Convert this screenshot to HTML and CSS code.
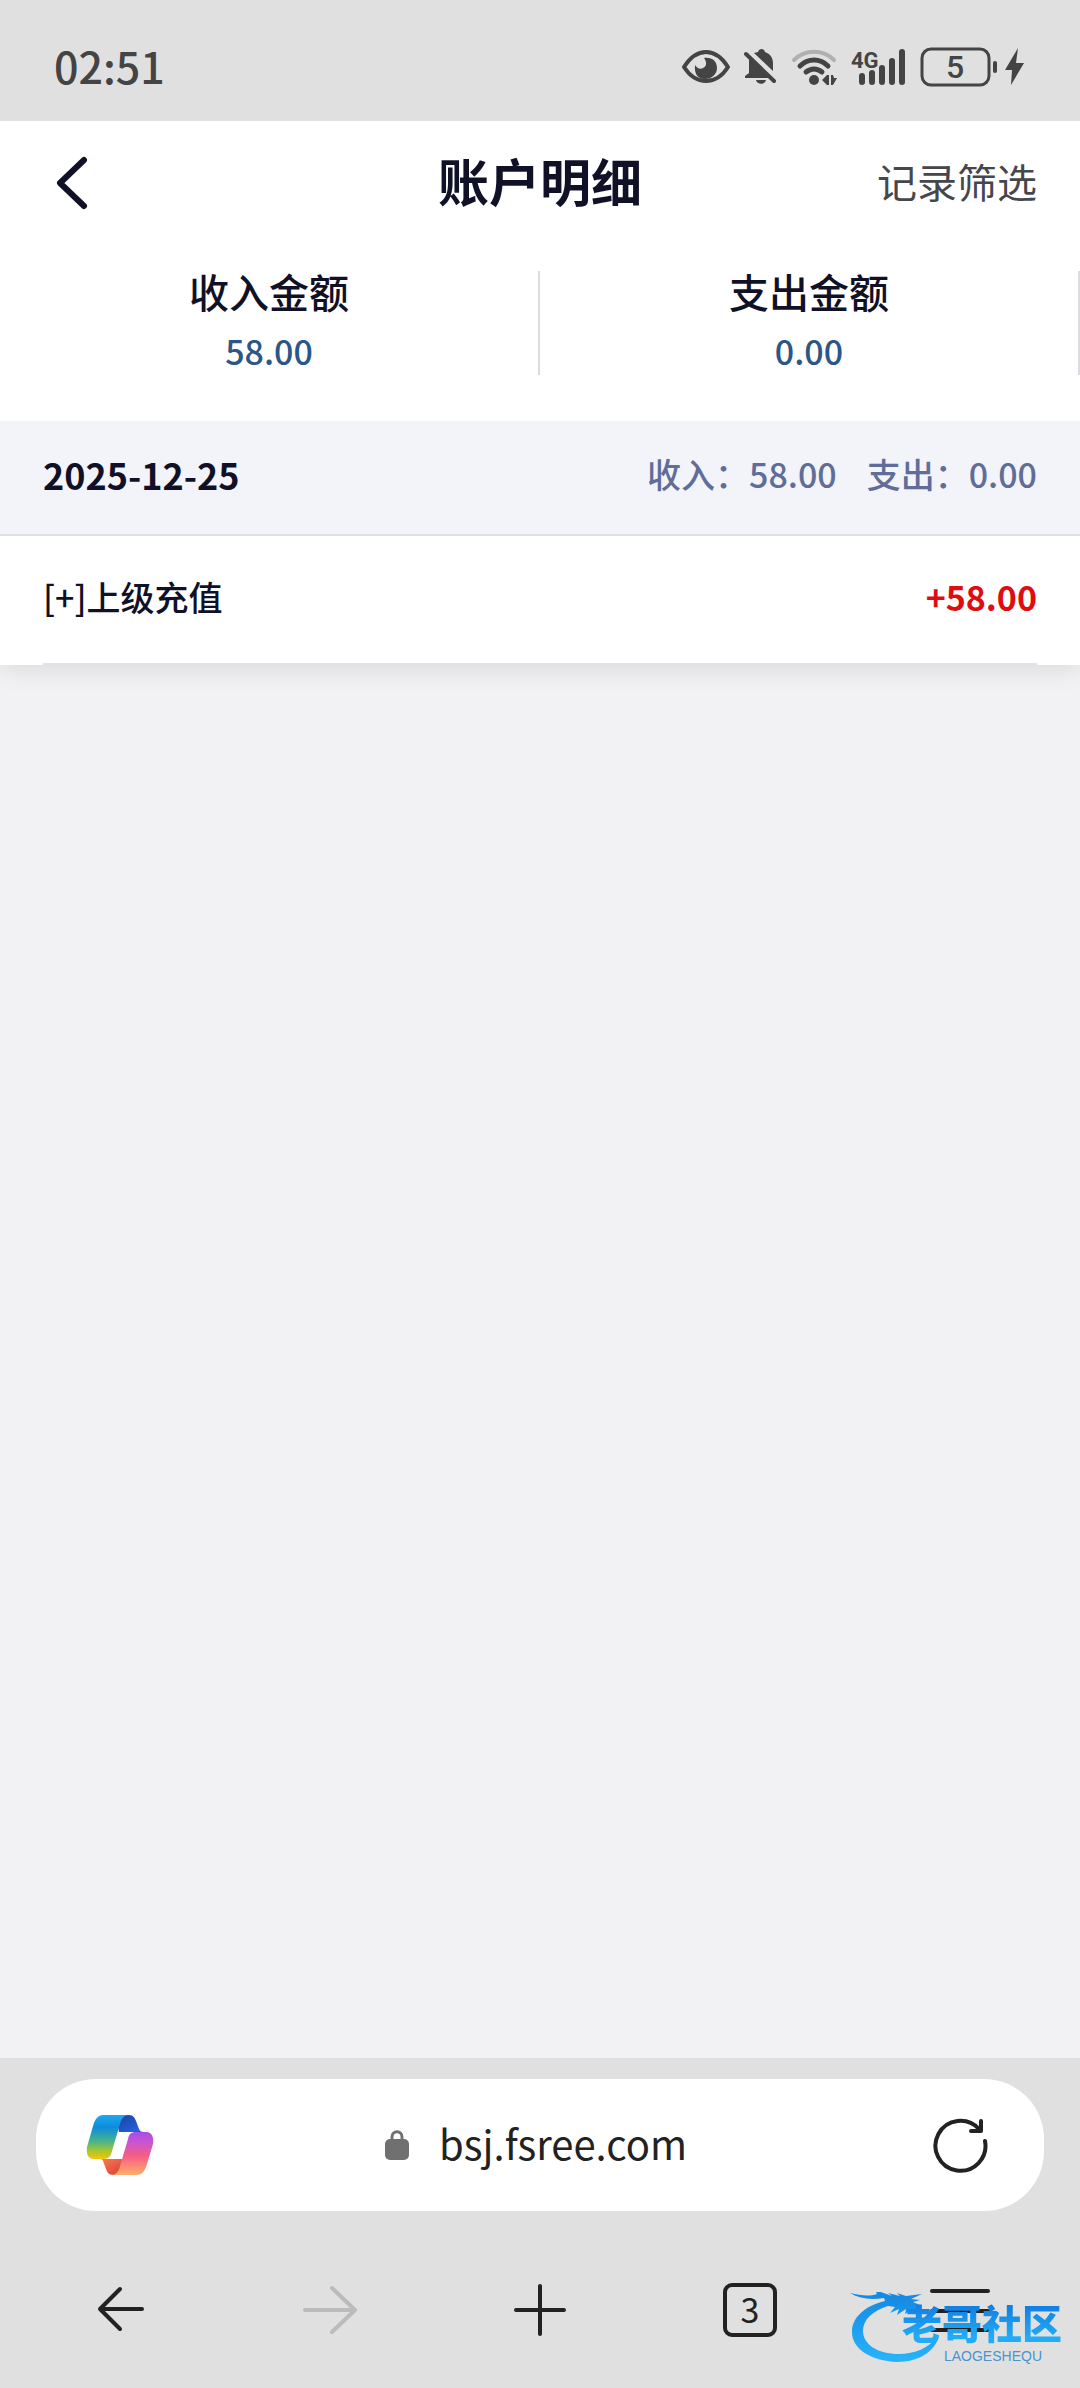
FILE: index.html
```html
<!DOCTYPE html>
<html lang="zh-CN">
<head>
    <meta charset="UTF-8">
    <meta name="viewport" content="width=device-width, initial-scale=1.0">
    <title>账户明细</title>
    <link rel="stylesheet" href="styles.css">
</head>
<body>

    <div class="status-bar">
        <span class="clock">02:51</span>
        <div class="status-icons">
            <!-- eye comfort -->
            <svg width="48" height="40" viewBox="0 0 48 40">
                <path d="M2 20C9 9 17 5 24 5s15 4 22 15c-7 11-15 14-22 14S9 31 2 20z" fill="none" stroke="#444" stroke-width="4" stroke-linejoin="round"/>
                <path d="M22 11c8-1 13 3 13 10 0 6-5 11-12 11S12 27 13 18c2 3 5 5 8 3 4-2 4-6 1-10z" fill="#444"/>
            </svg>
            <!-- muted bell -->
            <svg width="33" height="40" viewBox="0 0 33 40">
                <path d="M5 12v14l-4 3v2h25L6 11zM10 6l4-1c1-4 6-4 7 0 6 2 8 7 8 11v8L10 6zM12 33h10c-1 5-9 5-10 0z" fill="#444"/>
                <path d="M2 7l28 27" stroke="#444" stroke-width="4" stroke-linecap="round"/>
            </svg>
            <!-- wifi -->
            <svg width="46" height="40" viewBox="0 0 46 40">
                <g fill="none" stroke="#444" stroke-width="5" stroke-linecap="round">
                    <path d="M3 13c11-11 29-11 40 0" stroke="#b0b0b0" stroke-width="4"/>
                    <path d="M9 19c8-8 20-8 28 0"/>
                    <path d="M15 25c5-4 11-4 16 0"/>
                </g>
                <circle cx="23" cy="33" r="5" fill="#444"/>
                <path d="M31 33l5-5h2v10h-2zM40 28h2l1 3h3l-4 7h-2z" fill="#444"/>
            </svg>
            <!-- mobile signal -->
            <svg width="55" height="40" viewBox="0 0 55 40">
                <text x="0" y="21" class="signal-text">4G</text>
                <path d="M11 29v6M21 26v9M31 21v14M41 14v21M51 5v30" stroke="#444" stroke-width="6" stroke-linecap="round"/>
            </svg>
            <!-- battery, charging -->
            <svg width="105" height="40" viewBox="0 0 105 40">
                <rect x="2" y="2" width="67" height="36" rx="9" fill="none" stroke="#444" stroke-width="3"/>
                <path d="M75 16v8" stroke="#444" stroke-width="4" stroke-linecap="round"/>
                <text x="35" y="31" class="battery-text">5</text>
                <path d="M98 1L85 23h7l-1 15 13-22h-8z" fill="#444"/>
            </svg>
        </div>
    </div>

    <header class="page-header">
        <button class="back-btn" aria-label="返回">
            <svg width="32" height="54" viewBox="0 0 32 54">
                <path d="M28 4L4 27l24 23" fill="none" stroke="#101126" stroke-width="6" stroke-linecap="round" stroke-linejoin="round"/>
            </svg>
        </button>
        <h1>账户明细</h1>
        <button class="filter-btn">记录筛选</button>
    </header>

    <section class="summary">
        <div class="summary-item">
            <span class="summary-label">收入金额</span>
            <span class="summary-value">58.00</span>
        </div>
        <div class="summary-item">
            <span class="summary-label">支出金额</span>
            <span class="summary-value">0.00</span>
        </div>
    </section>

    <main class="content">
        <section class="day">
            <div class="day-header">
                <h2>2025-12-25</h2>
                <div class="day-total">
                    <span>收入：58.00</span>
                    <span>支出：0.00</span>
                </div>
            </div>
            <div class="record">
                <span>[+]上级充值</span>
                <span class="amount">+58.00</span>
            </div>
        </section>
    </main>

    <footer class="browser">
        <div class="address-bar">
            <button class="icon-btn" aria-label="Copilot">
                <svg width="68" height="62" viewBox="0 0 68 62">
                    <defs>
                        <linearGradient id="cool" x1="0" y1="0" x2="0" y2="1">
                            <stop offset="0" stop-color="#20a8ef"/>
                            <stop offset=".28" stop-color="#0d8bdc"/>
                            <stop offset=".6" stop-color="#49b489"/>
                            <stop offset=".82" stop-color="#a9c62c"/>
                            <stop offset="1" stop-color="#f5c50a"/>
                        </linearGradient>
                        <linearGradient id="warm" x1="0" y1="0" x2="0" y2="1">
                            <stop offset="0" stop-color="#a94be8"/>
                            <stop offset=".25" stop-color="#c956cf"/>
                            <stop offset=".55" stop-color="#f75b86"/>
                            <stop offset="1" stop-color="#ffaf69"/>
                        </linearGradient>
                        <linearGradient id="blue" x1="0" y1="0" x2="1" y2="1">
                            <stop offset="0" stop-color="#1c3f9f"/>
                            <stop offset="1" stop-color="#2568e8"/>
                        </linearGradient>
                        <linearGradient id="red" x1="0" y1="0" x2="1" y2="1">
                            <stop offset="0" stop-color="#ff8054"/>
                            <stop offset="1" stop-color="#d43b35"/>
                        </linearGradient>
                    </defs>
                    <path d="M30 1h13c4 0 6 3 7 6l3 8c1 2 2 3 5 3H33z" fill="url(#blue)"/>
                    <path d="M38 61H27c-4 0-6-3-7-6l-3-8c-1-2-2-2-5-2h26z" fill="url(#red)"/>
                    <path d="M17 1h26c-5 0-8 4-9 9l-8 27c-1 5-3 8-8 8H8c-6 0-8-5-7-12L7 12C9 5 12 1 17 1z" fill="url(#cool)"/>
                    <path d="M51 61H25c5 0 8-4 9-9l8-27c1-5 3-7 8-7h10c6 0 8 5 7 12l-6 20c-2 7-5 11-10 11z" fill="url(#warm)"/>
                </svg>
            </button>
            <button class="url">
                <svg width="24" height="32" viewBox="0 0 24 32">
                    <path d="M7 13V8c0-7 10-7 10 0v5" fill="none" stroke="#707070" stroke-width="3"/>
                    <rect y="10" width="24" height="21" rx="5" fill="#707070"/>
                </svg>
                <span>bsj.fsree.com</span>
            </button>
            <button class="icon-btn" aria-label="刷新">
                <svg width="58" height="58" viewBox="0 0 58 58">
                    <g fill="none" stroke="#222" stroke-width="4" stroke-linecap="round" stroke-linejoin="round">
                        <path d="M54 25A25 25 0 1 1 48 13"/>
                        <path d="M50 5v10H40"/>
                    </g>
                </svg>
            </button>
        </div>
        <nav class="toolbar">
            <button aria-label="后退">
                <svg width="60" height="60" viewBox="0 0 60 60">
                    <path d="M52 29H10M30 9L10 29l20 20" class="stroke"/>
                </svg>
            </button>
            <button aria-label="前进" disabled>
                <svg width="60" height="60" viewBox="0 0 60 60">
                    <path d="M5 30h50M32 8l23 22-23 22" class="stroke muted"/>
                </svg>
            </button>
            <button aria-label="新建标签页">
                <svg width="60" height="60" viewBox="0 0 60 60">
                    <path d="M6 30h48M30 6v48" class="stroke"/>
                </svg>
            </button>
            <button aria-label="标签页"><span class="tab-count">3</span></button>
            <button aria-label="菜单">
                <svg width="60" height="60" viewBox="0 0 60 60">
                    <path d="M2 11h56M2 31h56M2 50h56" class="stroke"/>
                </svg>
            </button>
        </nav>

        <div class="watermark">
            <svg class="dragon" width="94" height="72" viewBox="0 0 94 72">
                <defs>
                    <linearGradient id="water" x1="0" y1="0" x2="0" y2="1">
                        <stop offset="0" stop-color="#1486e0"/>
                        <stop offset="1" stop-color="#27b4fa"/>
                    </linearGradient>
                </defs>
                <path d="M35 9C14 14 2 26 2 40c0 17 19 29 45 30 22 0 39-11 42-27-10 13-24 19-40 19-22 0-36-10-36-23 0-11 9-20 25-25l7 1-5 6 9-4-2 6 9-6-1 5 8-5 8 3-3-4 4-2-9-4 7-2-9-1 11-5-16 2-9-3 3 3-12-3 4 3-17-6 2 4c-9 3-17 1-27-1 10 6 21 7 34 5z" fill="url(#water)"/>
            </svg>
            <div class="watermark-text">
                <span class="watermark-name">老哥社区</span>
                <span class="watermark-latin">LAOGESHEQU</span>
            </div>
        </div>
    </footer>

</body>
</html>
```
FILE: styles.css
```css
* {
    box-sizing: border-box;
}

body {
    margin: 0;
    min-height: 100vh;
    display: flex;
    flex-direction: column;
    background-color: #f2f2f5;
    color: #101126;
    font-family: "Noto Sans CJK SC", sans-serif;
    font-size: 34px;
    line-height: 48px;
}

button {
    padding: 0;
    border: none;
    background: none;
    color: inherit;
    font: inherit;
    cursor: pointer;
}

svg {
    display: block;
}

/* Phone status bar */
.status-bar {
    display: flex;
    justify-content: space-between;
    align-items: center;
    height: 121px;
    padding: 12px 55px 0 54px;
    background-color: #e0e0e0;
    color: #444;
}

.clock {
    padding-bottom: 4px;
    font-size: 43px;
    font-weight: 500;
}

.status-icons {
    display: flex;
    gap: 14px;
}

.signal-text {
    font-family: Roboto, sans-serif;
    font-size: 22px;
    font-weight: bold;
    fill: #444;
}

.battery-text {
    font-family: Roboto, sans-serif;
    font-size: 32px;
    font-weight: 500;
    fill: #444;
    text-anchor: middle;
}

/* Page header */
.page-header {
    display: grid;
    grid-template-columns: 1fr auto 1fr;
    align-items: center;
    height: 124px;
    padding: 0 43px;
    background-color: #fff;
}

.back-btn {
    justify-self: start;
    padding-left: 13px;
}

h1 {
    margin: 0;
    padding-bottom: 6px;
    font-size: 51px;
    font-weight: bold;
}

.filter-btn {
    justify-self: end;
    padding-bottom: 4px;
    font-size: 40px;
    color: #45474d;
}

.summary {
    position: relative;
    z-index: 1;
    display: flex;
    padding: 26px 0 46px;
    background-color: #fff;
}

.summary-item {
    flex: 1;
    display: flex;
    flex-direction: column;
    align-items: center;
    gap: 20px;
    height: 104px;
    border-right: 2px solid #dcdce0;
    line-height: 40px;
}

.summary-label {
    font-size: 40px;
    font-weight: 500;
}

.summary-value {
    color: #2d5688;
    font-weight: 500;
}

/* Records */
.content {
    flex: 1;
}

.day {
    background-color: #fff;
    box-shadow: 0 4px 24px rgba(0, 0, 0, 0.1);
}

.day-header {
    display: flex;
    justify-content: space-between;
    align-items: center;
    height: 115px;
    padding: 0 43px 8px;
    background-color: #f2f4fa;
    border-bottom: 2px solid #dddfe4;
}

h2 {
    margin: 0;
    font-size: 36px;
    font-weight: bold;
}

.day-total {
    display: flex;
    gap: 30px;
    color: #606d98;
    font-weight: 500;
}

.record {
    display: flex;
    justify-content: space-between;
    align-items: center;
    height: 129px;
    margin: 0 43px;
    padding-bottom: 6px;
    border-bottom: 2px solid #e2e2e6;
    font-weight: 500;
}

.amount {
    color: #df0c10;
    font-weight: bold;
}

/* Browser controls */
.browser {
    position: relative;
    padding: 21px 0 33px;
    background-color: #e0e0e0;
    color: #222;
}

.address-bar {
    display: flex;
    justify-content: space-between;
    align-items: center;
    height: 132px;
    margin: 0 36px;
    padding: 0 42px;
    background-color: #fff;
    border-radius: 60px;
}

.icon-btn {
    display: flex;
    justify-content: center;
    width: 84px;
}

.url {
    display: flex;
    align-items: center;
    gap: 30px;
    padding-right: 8px;
    font-size: 40px;
}

.url span {
    padding-bottom: 4px;
}

.toolbar {
    display: flex;
    height: 90px;
    margin-top: 54px;
    padding: 0 15px;
}

.toolbar button {
    flex: 1;
    display: flex;
    justify-content: center;
    align-items: center;
}

.stroke {
    fill: none;
    stroke: #222;
    stroke-width: 4;
    stroke-linecap: round;
    stroke-linejoin: round;
}

.muted {
    stroke: #bbb;
}

.tab-count {
    width: 54px;
    height: 54px;
    border: 4px solid #222;
    border-radius: 9px;
    line-height: 44px;
}

/* Community mark laid over the toolbar */
.watermark {
    position: absolute;
    right: 18px;
    bottom: 24px;
    display: flex;
    pointer-events: none;
}

.watermark-text {
    display: flex;
    flex-direction: column;
    align-items: flex-end;
    margin: 4px 0 0 -42px;
}

.watermark-name {
    background: linear-gradient(#1280e2 20%, #22acf6 80%);
    background-clip: text;
    color: transparent;
    font-size: 40px;
    font-weight: 900;
    line-height: 52px;
}

.watermark-latin {
    padding-right: 20px;
    color: #4a94cc;
    font-family: "Liberation Sans", sans-serif;
    font-size: 14px;
    line-height: 16px;
}
```
